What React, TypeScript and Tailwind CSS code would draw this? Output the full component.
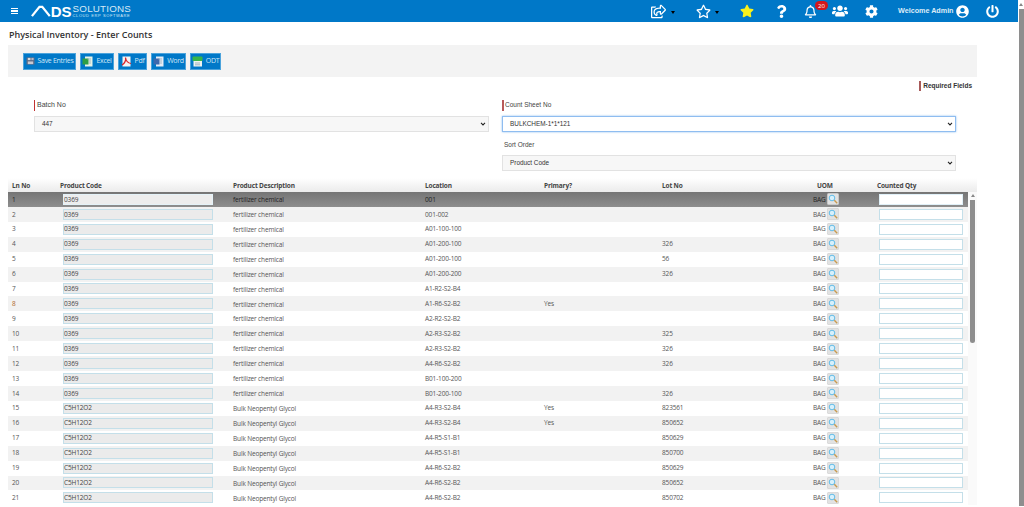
import {
  FaCog,
  FaPowerOff,
  FaQuestion,
  FaRegBell,
  FaRegShareSquare,
  FaRegStar,
  FaStar,
  FaUserCircle,
  FaUsers,
} from "react-icons/fa";

const chem = "fertilizer chemical";
const glycol = "Bulk Neopentyl Glycol";

const rows = [
  ["1", "0369", chem, "001", "", ""],
  ["2", "0369", chem, "001-002", "", ""],
  ["3", "0369", chem, "A01-100-100", "", ""],
  ["4", "0369", chem, "A01-200-100", "", "326"],
  ["5", "0369", chem, "A01-200-100", "", "56"],
  ["6", "0369", chem, "A01-200-200", "", "326"],
  ["7", "0369", chem, "A1-R2-S2-B4", "", ""],
  ["8", "0369", chem, "A1-R6-S2-B2", "Yes", ""],
  ["9", "0369", chem, "A2-R2-S2-B2", "", ""],
  ["10", "0369", chem, "A2-R3-S2-B2", "", "325"],
  ["11", "0369", chem, "A2-R3-S2-B2", "", "326"],
  ["12", "0369", chem, "A4-R6-S2-B2", "", "326"],
  ["13", "0369", chem, "B01-100-200", "", ""],
  ["14", "0369", chem, "B01-200-100", "", "326"],
  ["15", "C5H12O2", glycol, "A4-R3-S2-B4", "Yes", "823561"],
  ["16", "C5H12O2", glycol, "A4-R3-S2-B4", "Yes", "850652"],
  ["17", "C5H12O2", glycol, "A4-R5-S1-B1", "", "850629"],
  ["18", "C5H12O2", glycol, "A4-R5-S1-B1", "", "850700"],
  ["19", "C5H12O2", glycol, "A4-R6-S2-B2", "", "850629"],
  ["20", "C5H12O2", glycol, "A4-R6-S2-B2", "", "850652"],
  ["21", "C5H12O2", glycol, "A4-R6-S2-B2", "", "850702"],
];

const gridCols = "grid grid-cols-[52px_173px_192px_119px_118px_148px_67px_91px]";

function Magnifier() {
  return (
    <svg width="12" height="12" viewBox="0 0 12 12" className="shrink-0">
      <rect x="0.3" y="0.3" width="11.4" height="11.4" rx="1.5" fill="#e2e2e2" stroke="#cacaca" strokeWidth="0.6" />
      <circle cx="5" cy="5" r="2.8" fill="#d8f0fb" stroke="#62bce8" strokeWidth="1" />
      <path d="M7.3 7.3 L10.2 10.2" stroke="#c79a4e" strokeWidth="1.4" />
    </svg>
  );
}

function SaveIcon() {
  return (
    <svg width="9" height="8" viewBox="0 0 10 9">
      <rect x="0.5" y="0.5" width="9" height="8" fill="#5d6b86" />
      <rect x="2" y="1" width="3" height="2.5" fill="#d8d8d8" />
      <rect x="6" y="1" width="2.5" height="2.5" fill="#b8b8c4" />
      <rect x="2" y="5" width="6" height="3" fill="#c8c8d0" />
    </svg>
  );
}

function DocIcon({ back, mark }: { back: string; mark: string }) {
  return (
    <svg width="11" height="11" viewBox="0 0 11 11">
      <rect x="3" y="0.5" width="7.5" height="10" fill={back} />
      <rect x="0.5" y="2.5" width="6" height="6" fill={mark} />
      <path d="M5 3 H9 M7 5 H9 M7 7 H9" stroke="#8aa0b0" strokeWidth="0.7" />
    </svg>
  );
}

function PdfIcon() {
  return (
    <svg width="11" height="11" viewBox="0 0 11 11">
      <rect x="1.5" y="0.5" width="8" height="10" fill="#f4f4f4" />
      <path d="M1 9 C4 7 5 4 4.5 1.5 C5 5 7 7 10 7.5" fill="none" stroke="#d8232a" strokeWidth="1.2" />
    </svg>
  );
}

function OdtIcon() {
  return (
    <svg width="11" height="11" viewBox="0 0 11 11">
      <rect x="1.5" y="1" width="8.5" height="9.5" fill="#eef3ee" />
      <rect x="0.5" y="0.5" width="10" height="4.5" rx="1" fill="#38b548" />
      <path d="M3 7 H8 M3 8.8 H8" stroke="#7e9bb0" strokeWidth="0.7" />
    </svg>
  );
}

function ToolButton({ icon, label, width }: { icon: React.ReactNode; label: string; width: string }) {
  return (
    <button className={`flex h-[17px] items-center justify-center gap-[3px] border border-[#4ba3dc] bg-[#0078c8] text-[7px] tracking-[-0.3px] whitespace-nowrap text-[#cfe6f6] ${width}`}>
      {icon}
      <span>{label}</span>
    </button>
  );
}

function SelectBox({ value, focused }: { value: string; focused?: boolean }) {
  const look = focused
    ? "border-[#8fbdf0] bg-white shadow-[0_0_2px_#8fbdf0]"
    : "border-[#e2e2e2] bg-[#f7f7f7]";
  return (
    <div className={`flex h-[16px] w-full items-center justify-between border pl-[7px] pr-[2px] text-[6.4px] text-[#333] ${look}`}>
      <span>{value}</span>
      <svg width="6" height="4" viewBox="0 0 7 5">
        <path d="M1 1 L3.5 3.6 L6 1" fill="none" stroke="#222" strokeWidth="1.3" />
      </svg>
    </div>
  );
}

function Row({ row, index }: { row: string[]; index: number }) {
  const selected = index === 0;
  const bg = selected
    ? "bg-gradient-to-b from-[#757575] to-[#8e8e8e] text-[#222]"
    : index % 2 === 1
      ? "bg-[#f2f2f2] text-[#555]"
      : "bg-white text-[#555]";
  return (
    <div className={`${gridCols} h-[14.93px] items-center text-[6.5px] tracking-[-0.15px] ${bg}`}>
      <span className={`pl-[4px] ${row[0] === "8" ? "text-[#b0682c]" : ""}`}>{row[0]}</span>
      <div className="pl-[3px]">
        <div
          className={`flex h-[11px] w-[150px] items-center border text-[#444] ${
            selected ? "border-[#e4f2f8] bg-[#ededed]" : "border-[#c4dfe9] bg-[#ebebeb]"
          }`}
        >
          {row[1]}
        </div>
      </div>
      <span className="pt-[1px]">{row[2]}</span>
      <span>{row[3]}</span>
      <span>{row[4]}</span>
      <span>{row[5]}</span>
      <div className="flex items-center gap-[1px] pl-[3px]">
        <span>BAG</span>
        <Magnifier />
      </div>
      <div className="pl-[2px]">
        <div className={`h-[11px] w-[84px] border bg-white ${selected ? "border-[#e0f0f8]" : "border-[#c4dfe9]"}`} />
      </div>
    </div>
  );
}

export default function App() {
  return (
    <div className="flex h-[507px] w-[1024px] overflow-hidden bg-white font-['Open_Sans',sans-serif]">
      <div className="w-[1018px] shrink-0">
        <header className="relative flex h-[22px] items-center bg-[#0078c8] text-white">
          <div className="ml-[11px] flex w-[7px] flex-col gap-[1px]">
            <span className="h-[1.4px] bg-white" />
            <span className="h-[1.4px] bg-white" />
            <span className="h-[1.4px] bg-white" />
          </div>
          <div className="ml-[13px] flex w-[100px] items-center">
            <svg width="21" height="12" viewBox="0 0 21 12">
              <path d="M1 11.5 L9 1.5 H12 L20 11.5" fill="none" stroke="#fff" strokeWidth="2.4" />
            </svg>
            <span className="font-['Liberation_Sans',sans-serif] text-[15px] leading-none font-bold">DS</span>
            <div className="ml-[1px] flex flex-col font-['Liberation_Sans',sans-serif] leading-none text-[#d5e8f6]">
              <span className="text-[9.8px] tracking-[0.2px]">SOLUTIONS</span>
              <span className="text-[4px] tracking-[0.6px]">CLOUD ERP SOFTWARE</span>
            </div>
          </div>
          <FaRegShareSquare className="ml-[520px] text-[15px]" />
          <span className="mt-[3px] ml-[5px] h-0 w-0 border-x-[2.5px] border-t-[3px] border-x-transparent border-t-black" />
          <FaRegStar className="ml-[21px] text-[15px]" />
          <span className="mt-[3px] ml-[4px] h-0 w-0 border-x-[2.5px] border-t-[3px] border-x-transparent border-t-black" />
          <FaStar className="ml-[21px] text-[14px] text-[#f7f01c]" />
          <FaQuestion className="ml-[21px] text-[13px]" />
          <FaRegBell className="ml-[16px] text-[13px]" />
          <span className="absolute top-[1px] left-[815px] flex h-[9px] w-[13px] items-center justify-center rounded-full bg-[#d2171c] text-[6px] leading-none">20</span>
          <FaUsers className="ml-[15px] text-[16px]" />
          <FaCog className="ml-[17px] text-[13px]" />
          <span className="ml-[20px] font-['Liberation_Sans',sans-serif] text-[7.2px] font-bold text-[#dcecf8]">Welcome Admin</span>
          <FaUserCircle className="ml-[2px] text-[13px]" />
          <FaPowerOff className="ml-[17px] text-[13px]" />
        </header>

        <h1 className="mt-[7px] ml-[9px] h-[16px] text-[9px] leading-[11px] font-semibold text-[#333]">
          Physical Inventory - Enter Counts
        </h1>

        <div className="ml-[8px] flex h-[32px] w-[969px] items-center gap-[4px] bg-[#f3f3f3] pl-[15px]">
          <ToolButton icon={<SaveIcon />} label="Save Entries" width="w-[53px]" />
          <ToolButton icon={<DocIcon back="#e6f2e6" mark="#2f9e44" />} label="Excel" width="w-[34px]" />
          <ToolButton icon={<PdfIcon />} label="Pdf" width="w-[29px]" />
          <ToolButton icon={<DocIcon back="#e4ecf6" mark="#3d68ad" />} label="Word" width="w-[35px]" />
          <ToolButton icon={<OdtIcon />} label="ODT" width="w-[31px]" />
        </div>

        <div className="font-['Liberation_Sans',sans-serif]">
          <div className="mt-[4px] flex h-[10px] justify-end pr-[46px] text-[6.5px] font-bold text-[#333]">
            <span className="border-l-2 border-[#a85a5a] pl-[2px] leading-[9px]">Required Fields</span>
          </div>

          <div className="mt-[9px] ml-[34px] flex gap-[13px]">
            <div className="w-[455px]">
              <label className="block h-[11px] border-l border-[#c23232] pl-[2px] text-[7px] leading-[10px] text-[#444]">Batch No</label>
              <div className="mt-[5px]">
                <SelectBox value="447" />
              </div>
            </div>
            <div className="w-[454px]">
              <label className="block h-[11px] border-l-2 border-[#b85a5a] pl-[1px] text-[6.5px] leading-[10px] text-[#444]">Count Sheet No</label>
              <div className="mt-[5px]">
                <SelectBox value="BULKCHEM-1*1*121" focused />
              </div>
              <label className="mt-[8px] block h-[11px] pl-[2px] text-[6.5px] leading-[10px] text-[#444]">Sort Order</label>
              <div className="mt-[4px]">
                <SelectBox value="Product Code" />
              </div>
            </div>
          </div>
        </div>

        <div className="mt-[7px] ml-[8px] w-[969px]">
          <div className={`${gridCols} h-[14px] w-full items-center bg-gradient-to-b from-white to-[#ebebeb] pt-[1px] text-[6.5px] font-bold tracking-[-0.15px] text-[#444]`}>
            <span className="pl-[4px]">Ln No</span>
            <span>Product Code</span>
            <span>Product Description</span>
            <span>Location</span>
            <span>Primary?</span>
            <span>Lot No</span>
            <span className="pl-[7px]">UOM</span>
            <span>Counted Qty</span>
          </div>
          <div className="flex">
            <div className="w-[960px]">
              {rows.map((row, i) => (
                <Row key={row[0]} row={row} index={i} />
              ))}
            </div>
            <div className="flex w-[9px] flex-col items-center bg-[#fafafa] pt-[2px]">
              <span className="h-0 w-0 border-x-[2.5px] border-b-[3px] border-x-transparent border-b-[#888]" />
              <span className="mt-[3px] h-[143px] w-[5px] rounded-b-sm bg-[#8e8e8e]" />
            </div>
          </div>
        </div>
      </div>

      <div className="flex w-[6px] flex-col items-center pt-[3px]">
        <span className="h-0 w-0 border-x-[2.5px] border-b-[3px] border-x-transparent border-b-[#888]" />
        <span className="mt-[3px] h-[497px] w-[5px] bg-[#8e8e8e]" />
      </div>
    </div>
  );
}
